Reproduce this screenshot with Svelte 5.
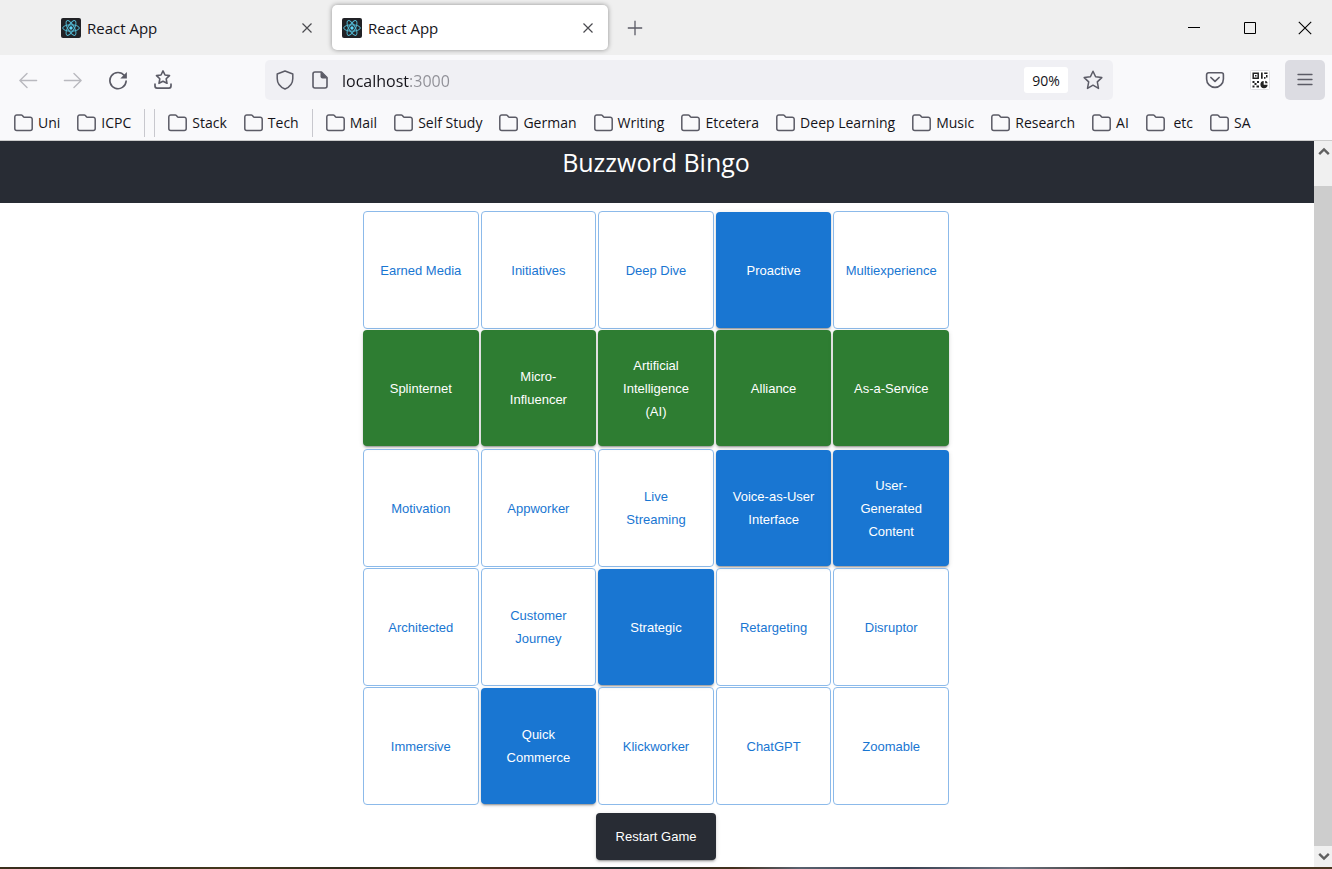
<script>
  const bookmarks = [
    { label: 'Uni' },
    { label: 'ICPC' },
    { divider: true },
    { divider: true },
    { label: 'Stack' },
    { label: 'Tech' },
    { divider: true },
    { label: 'Mail' },
    { label: 'Self Study' },
    { label: 'German' },
    { label: 'Writing' },
    { label: 'Etcetera' },
    { label: 'Deep Learning' },
    { label: 'Music' },
    { label: 'Research' },
    { label: 'AI' },
    { label: '\u00a0etc' },
    { label: 'SA' }
  ];

  let cells = $state([
    ['Earned Media', ''], ['Initiatives', ''], ['Deep Dive', ''], ['Proactive', 'picked'], ['Multiexperience', ''],
    ['Splinternet', 'won'], ['Micro-Influencer', 'won'], ['Artificial Intelligence (AI)', 'won'], ['Alliance', 'won'], ['As-a-Service', 'won'],
    ['Motivation', ''], ['Appworker', ''], ['Live Streaming', ''], ['Voice-as-User Interface', 'picked'], ['User-Generated Content', 'picked'],
    ['Architected', ''], ['Customer Journey', ''], ['Strategic', 'picked'], ['Retargeting', ''], ['Disruptor', ''],
    ['Immersive', ''], ['Quick Commerce', 'picked'], ['Klickworker', ''], ['ChatGPT', ''], ['Zoomable', '']
  ].map(([word, status]) => ({ word, status })));

  function toggle(cell) {
    if (cell.status !== 'won') cell.status = cell.status ? '' : 'picked';
  }

  function restart() {
    for (const cell of cells) cell.status = '';
  }
</script>

{#snippet reactLogo()}
  <svg class="favicon" width="20" height="20" viewBox="0 0 20 20" aria-hidden="true">
    <rect width="20" height="20" rx="2" fill="#212226" />
    <g fill="none" stroke="#53b9d3" stroke-width="1">
      <ellipse cx="10" cy="10" rx="8.3" ry="3.2" />
      <ellipse cx="10" cy="10" rx="8.3" ry="3.2" transform="rotate(60 10 10)" />
      <ellipse cx="10" cy="10" rx="8.3" ry="3.2" transform="rotate(120 10 10)" />
    </g>
    <circle cx="10" cy="10" r="1.7" fill="#61dafb" />
  </svg>
{/snippet}

{#snippet tab(active)}
  <div class="tab" class:active>
    <button class="tab-label" role="tab" aria-selected={active}>
      {@render reactLogo()}
      <span>React App</span>
    </button>
    <button class="tab-close" aria-label="Close tab">
      <svg width="12" height="12" viewBox="0 0 12 12"><path d="M1.5 1.5l9 9M10.5 1.5l-9 9" fill="none" stroke="#4a4a4f" stroke-width="1.2" /></svg>
    </button>
  </div>
{/snippet}

<div class="window">
  <div class="titlebar">
    <div class="tabs" role="tablist">
      {@render tab(false)}
      {@render tab(true)}
    </div>
    <button class="new-tab" aria-label="New tab">
      <svg width="16" height="16" viewBox="0 0 16 16"><path d="M8 .8v14.4M.8 8h14.4" stroke="#5b5b66" stroke-width="1.3" /></svg>
    </button>
    <div class="controls">
      <button aria-label="Minimize"><svg width="12" height="12" viewBox="0 0 12 12"><path d="M0 5.5h12" stroke="#000" /></svg></button>
      <button aria-label="Maximize"><svg width="12" height="12" viewBox="0 0 12 12"><path d="M.5.5h11v11H.5z" fill="none" stroke="#000" /></svg></button>
      <button class="close" aria-label="Close"><svg width="14" height="14" viewBox="0 0 14 14"><path d="M.8.8l12.4 12.4M13.2.8L.8 13.2" stroke="#000" stroke-width="1.1" /></svg></button>
    </div>
  </div>

  <nav class="toolbar" aria-label="Navigation">
    <button class="tool faded" aria-label="Back">
      <svg width="20" height="20" viewBox="0 0 20 20"><path d="M18.6 10.5H2M9 3.6L1.9 10.5 9 17.4" /></svg>
    </button>
    <button class="tool faded" aria-label="Forward">
      <svg width="20" height="20" viewBox="0 0 20 20"><path d="M1.4 10.5H18M11 3.6l7.1 6.9-7.1 6.9" /></svg>
    </button>
    <button class="tool" aria-label="Reload">
      <svg width="20" height="20" viewBox="0 0 20 20"><path d="M16.4 5.6A8.1 8.1 0 1 0 18.1 11.2" stroke-width="1.7" /><path class="solid" d="M18.9 2v6.6h-6.6z" /></svg>
    </button>
    <button class="tool" aria-label="Bookmarks">
      <svg width="20" height="20" viewBox="0 0 20 20"><path d="M10 .9l2 4.1 4.5.6-3.3 3.2.8 4.5-4-2.1-4 2.1.8-4.5-3.3-3.2L8 5z" stroke-width="1.6" /><path d="M2 14.2v1.9a2 2 0 0 0 2 2h12a2 2 0 0 0 2-2v-1.9" stroke-width="1.7" /></svg>
    </button>

    <div class="urlbar">
      <svg width="20" height="20" viewBox="0 0 20 20"><path d="M10 1L2.2 4v4.400c0 4.500 3 8.500 7.800 10.600 4.800-2.100 7.800-6.100 7.800-10.600V4z" stroke-width="1.5" /></svg>
      <svg class="site-info" width="20" height="20" viewBox="0 0 20 20"><path d="M5 2h6.500l5.500 5.500V16a2 2 0 0 1-2 2H5a2 2 0 0 1-2-2V4a2 2 0 0 1 2-2z" stroke-width="1.6" /><path class="solid" d="M10.500 1.500v5a2 2 0 0 0 2 2h5z" /></svg>
      <input type="text" aria-label="Address" value="localhost:3000" />
      <button class="zoom">90%</button>
      <button class="star" aria-label="Bookmark this page">
        <svg width="20" height="20" viewBox="0 0 20 20"><path d="M10 1.200l2.600 5.600 6.200.8-4.500 4.300 1.200 6.500L10 15.200l-5.500 3.200 1.200-6.500L1.200 7.600l6.200-.8z" stroke-width="1.5" /></svg>
      </button>
    </div>

    <button class="tool" aria-label="Save to Pocket">
      <svg width="20" height="20" viewBox="0 0 20 20"><path d="M3.600 2.800h12.800a2 2 0 0 1 2 2V9a8.400 8.400 0 0 1-16.800 0V4.800a2 2 0 0 1 2-2z" stroke-width="1.600" /><path d="M5.900 7.500L10 11.400l4.100-3.900" stroke-width="1.700" /></svg>
    </button>
    <button class="tool" aria-label="QR code">
      <svg class="qr" width="20" height="20" viewBox="0 0 20 20">
        <rect x=".5" y=".5" width="19" height="19" rx="1" fill="#fff" stroke="#dedee2" />
        <path fill="none" stroke="#222" stroke-width="1.500" d="M3.200 3.200h5v5h-5z" />
        <path fill="#222" d="M5 5h1.500v1.500H5zM11 2.500h1.700v6.200H11zM14.200 2.500h3.300v1.600h-3.300zM16 5h1.500v2.500H16zM14 7h1.500v1.700H14zM2.500 11h2v2h-2zM4.500 13h2v2h-2zM7 11h2v2H7zM2.500 15.500h2v2h-2zM6.500 15.500H9v2H6.500zM13.700 11v3.700h3.900a3.600 3.600 0 1 1-3.900-3.700zM15.200 10.700a3 3 0 0 1 2.500 2.500h-2.500z" />
      </svg>
    </button>
    <button class="tool menu" aria-label="Menu">
      <svg width="20" height="20" viewBox="0 0 20 20"><path d="M3 4.500h14M3 9.500h14M3 14.500h14" stroke-width="1.300" /></svg>
    </button>
  </nav>

  <div class="bookmarks">
    {#each bookmarks as item}
      {#if item.divider}
        <span class="divider"></span>
      {:else}
        <button>
          <svg width="19" height="18" viewBox="0 0 19 18"><path d="M2.800 1h4.400c.5 0 .9.200 1.200.5l1 1.300c.2.300.6.400 1 .4h5.800a2 2 0 0 1 2 2v9.300a2 2 0 0 1-2 2H2.800a2 2 0 0 1-2-2V3a2 2 0 0 1 2-2z" fill="none" stroke="#5b5b66" stroke-width="1.500" /></svg>
          <span>{item.label}</span>
        </button>
      {/if}
    {/each}
  </div>

  <div class="viewport">
    <div class="page">
      <header><h1>Buzzword Bingo</h1></header>
      <main>
        <div class="board">
          {#each cells as cell}
            <button class="cell {cell.status}" aria-pressed={cell.status !== ''} onclick={() => toggle(cell)}>{cell.word}</button>
          {/each}
        </div>
        <button class="restart" onclick={restart}>Restart Game</button>
      </main>
    </div>
    <div class="scrollbar">
      <button aria-label="Scroll up"><svg width="12" height="9" viewBox="0 0 12 9"><path d="M1.200 7.200L6 2.400l4.800 4.800" fill="none" stroke="#606060" stroke-width="2.400" /></svg></button>
      <div class="track"><div class="thumb"></div></div>
      <button aria-label="Scroll down"><svg width="12" height="9" viewBox="0 0 12 9"><path d="M1.200 1.800L6 6.600l4.800-4.800" fill="none" stroke="#606060" stroke-width="2.400" /></svg></button>
    </div>
  </div>
  <div class="desktop-edge"></div>
</div>

<style>
  :global(body) {
    margin: 0;
    background: #fff;
  }

  .window {
    display: flex;
    flex-direction: column;
    min-height: 100vh;
    font-family: "Open Sans", "Noto Sans", sans-serif;
    color: #15141a;
  }

  button {
    display: flex;
    align-items: center;
    justify-content: center;
    margin: 0;
    padding: 0;
    border: 0;
    background: none;
    color: inherit;
    font: inherit;
  }

  svg {
    display: block;
    flex: none;
  }

  .titlebar {
    display: flex;
    align-items: center;
    height: 55px;
    padding-left: 51px;
    background: #efefef;
  }

  .tabs {
    display: flex;
    gap: 5px;
  }

  .tab {
    display: flex;
    align-items: center;
    width: 276px;
    height: 45px;
    border-radius: 5px;
    font-size: 15px;
  }

  .tab.active {
    background: #fff;
    box-shadow: 0 0 5px rgba(0, 0, 0, 0.4);
  }

  .tab-label {
    flex: 1;
    justify-content: flex-start;
    gap: 6px;
    height: 100%;
    padding-left: 10px;
  }

  .tab-close {
    width: 30px;
    height: 30px;
    margin-right: 5px;
  }

  .new-tab {
    width: 40px;
    height: 40px;
    margin-left: 7px;
  }

  .controls {
    display: flex;
    margin-left: auto;
  }

  .controls button {
    width: 56px;
    height: 54px;
  }

  .controls .close {
    width: 54px;
  }

  .toolbar {
    display: flex;
    align-items: center;
    gap: 5px;
    padding: 5px 7px 5px 8px;
    background: #f9f9fb;
  }

  .tool {
    width: 40px;
    height: 40px;
    border-radius: 5px;
  }

  .tool svg:not(.qr),
  .urlbar svg {
    fill: none;
    stroke: #5b5b66;
    stroke-width: 1.4;
    stroke-linecap: round;
    stroke-linejoin: round;
  }

  .toolbar .solid {
    fill: #5b5b66;
    stroke: none;
  }

  .faded {
    opacity: 0.4;
  }

  .menu {
    background: #dcdce2;
  }

  .urlbar {
    display: flex;
    flex: 1;
    align-items: center;
    height: 40px;
    min-width: 0;
    margin: 0 77px;
    padding: 0 10px;
    box-sizing: border-box;
    border-radius: 5px;
    background: #f0f0f4;
  }

  .site-info {
    margin: 0 12px 0 15px;
  }

  input {
    flex: 1;
    min-width: 0;
    height: 32px;
    padding: 2px 0 0;
    box-sizing: border-box;
    border: 0;
    outline: 0;
    background: linear-gradient(90deg, #15141a 68px, #8f8f96 68px);
    background-clip: text;
    color: transparent;
    caret-color: #15141a;
    font: 16px "Open Sans", "Noto Sans", sans-serif;
  }

  .zoom {
    width: 44px;
    height: 26px;
    border-radius: 3px;
    background: #fff;
    font-size: 14px;
  }

  .star {
    margin-left: 15px;
  }

  .bookmarks {
    display: flex;
    align-items: center;
    gap: 17px;
    height: 35px;
    padding-left: 14px;
    border-bottom: 1px solid #ccc;
    background: #f9f9fb;
    font-size: 14px;
    white-space: nowrap;
    overflow: hidden;
  }

  .bookmarks button {
    gap: 5px;
  }

  .divider {
    width: 1px;
    height: 28px;
    margin: 0 -4px;
    background: #c8c8ce;
  }

  .viewport {
    display: flex;
    flex: 1;
  }

  .page {
    flex: 1;
    background: #fff;
  }

  header {
    height: 62px;
    background: #282c34;
    color: #fff;
    text-align: center;
  }

  h1 {
    margin: 0;
    padding-right: 2px;
    font-size: 25px;
    font-weight: 400;
    line-height: 42px;
  }

  main {
    display: flex;
    flex-direction: column;
    align-items: center;
    padding: 8px 2px 7px 0;
    font-family: "Liberation Sans", Arial, sans-serif;
    font-size: 13px;
    line-height: 23px;
  }

  .board {
    display: grid;
    grid-template-columns: repeat(5, 1fr);
    grid-auto-rows: 118px;
    gap: 1px 2px;
    width: 100%;
    max-width: 586px;
  }

  .cell {
    min-width: 0;
    padding: 0 14px;
    border: 1px solid #8cbaea;
    border-radius: 4px;
    color: #1976d2;
    text-align: center;
  }

  .cell.picked,
  .cell.won,
  .restart {
    border: 0;
    color: #fff;
    box-shadow: 0 3px 1px -2px rgba(0, 0, 0, 0.2), 0 2px 2px 0 rgba(0, 0, 0, 0.14), 0 1px 5px 0 rgba(0, 0, 0, 0.12);
  }

  .cell.picked {
    margin: 1px 0;
    background: #1976d2;
  }

  .cell.won {
    margin-bottom: 2px;
    background: #2e7d32;
  }

  .restart {
    width: 120px;
    height: 47px;
    margin-top: 8px;
    border-radius: 4px;
    background: #282c34;
  }

  .scrollbar {
    display: flex;
    flex-direction: column;
    width: 18px;
    background: #f0f0f0;
  }

  .scrollbar button {
    height: 21px;
    padding-left: 2px;
  }

  .track {
    display: flex;
    flex: 1;
    padding-top: 24px;
  }

  .thumb {
    flex: 1;
    background: #cdcdcd;
  }

  .desktop-edge {
    height: 2px;
    background: linear-gradient(90deg, #3c2f1c, #2b2a24 8%, #45381c 17%, #2f2b1c 26%, #4a3717 35%, #4a2a20 38%, #203030 47%, #43301c 55%, #59616e 60%, #3a4252 68%, #6b7280 76%, #3a3128 85%, #4a3520);
  }
</style>
